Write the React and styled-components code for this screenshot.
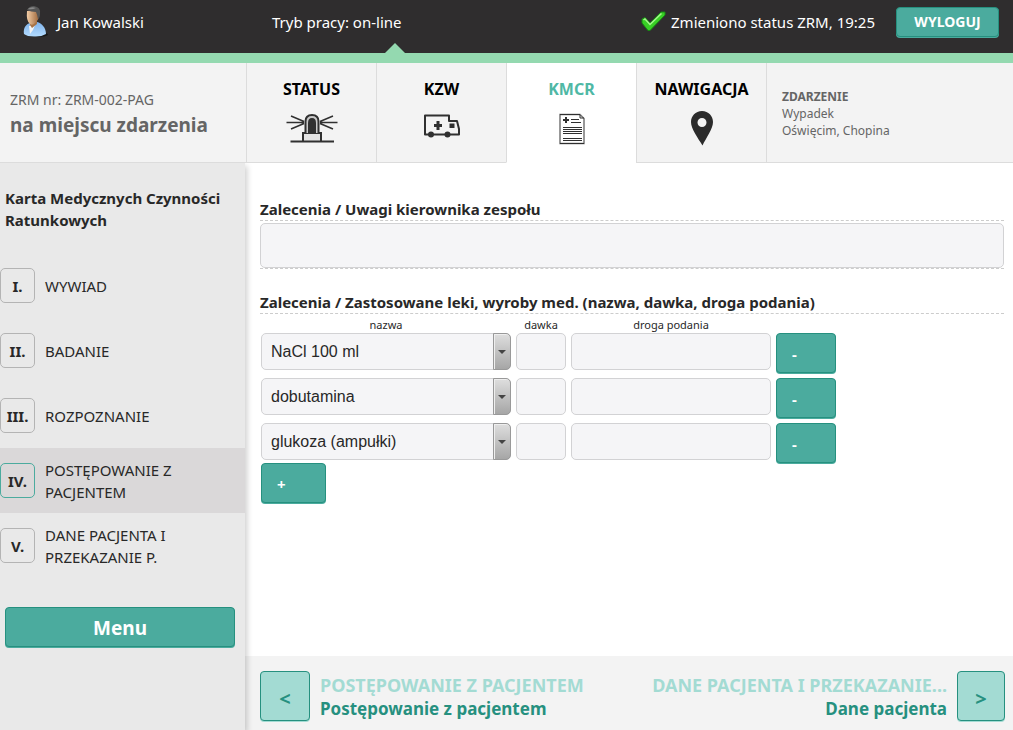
import React, { useState } from 'react';
import styled, { createGlobalStyle } from 'styled-components';

const GlobalStyle = createGlobalStyle`
  * {
    box-sizing: border-box;
  }

  body {
    margin: 0;
    color: #282828;
    background: #fff;
    font-family: 'Noto Sans', 'Open Sans', sans-serif;
    font-size: 15px;
    line-height: 22px;
  }

  button,
  input,
  textarea,
  select {
    font-family: inherit;
  }
`;

const Page = styled.div`
  display: flex;
  flex-direction: column;
  min-height: 100vh;
`;

const TopBar = styled.header`
  position: relative;
  display: flex;
  align-items: center;
  height: 63px;
  padding: 6px 14px 16px 22px;
  color: #fff;
  background: #2f2d2e;
  border-bottom: 10px solid #94d9b0;

  &::after {
    content: '';
    position: absolute;
    left: 385px;
    bottom: 0;
    border: 10px solid transparent;
    border-top: 0;
    border-bottom-color: #94d9b0;
  }
`;

const User = styled.div`
  display: flex;
  align-items: center;
  gap: 9px;
  width: 250px;
`;

const Status = styled.div`
  display: flex;
  align-items: center;
  gap: 5px;
  margin-left: auto;
  margin-right: 21px;
`;

const Button = styled.button`
  padding: 0;
  color: #fff;
  font-weight: bold;
  background: #4bab9e;
  border: 1px solid #26907f;
  border-radius: 4px;
  box-shadow: 0 1px 0 #4bab9e;
  cursor: pointer;
`;

const LogoutButton = styled(Button)`
  width: 103px;
  height: 30px;
  font-size: 14px;
`;

const TabBar = styled.div`
  position: relative;
  z-index: 2;
  display: flex;
  height: 100px;
  background: #f3f3f3;
`;

const Team = styled.div`
  display: flex;
  flex-direction: column;
  justify-content: center;
  width: 246px;
  padding: 2px 0 0 10px;
  color: #656565;
  font-size: 14px;
  border-bottom: 1px solid #dcdcdc;
`;

const TeamState = styled.strong`
  font-size: 19px;
  line-height: 28px;
`;

const Tabs = styled.nav`
  display: flex;
`;

const Tab = styled.a`
  display: flex;
  flex-direction: column;
  align-items: center;
  gap: 11px;
  width: 130px;
  padding-top: 15px;
  color: ${(props) => (props.$active ? '#4fb8a5' : '#000')};
  font-size: 16px;
  font-weight: bold;
  text-decoration: none;
  background: ${(props) => (props.$active ? '#fff' : '#f3f3f3')};
  border-left: 1px solid #dcdcdc;
  border-bottom: 1px solid ${(props) => (props.$active ? '#fff' : '#dcdcdc')};
`;

const Incident = styled.div`
  display: flex;
  flex: 1;
  flex-direction: column;
  justify-content: center;
  padding: 2px 0 0 15px;
  color: #656565;
  font-size: 12px;
  line-height: 17px;
  border-left: 1px solid #dcdcdc;
  border-bottom: 1px solid #dcdcdc;
`;

const Body = styled.div`
  display: flex;
  flex: 1;
`;

const Sidebar = styled.aside`
  position: relative;
  z-index: 1;
  flex: none;
  width: 245px;
  background: #e9e9e9;
  box-shadow: 2px 3px 6px rgba(0, 0, 0, 0.2);
`;

const SidebarTitle = styled.h2`
  margin: 0;
  padding: 24px 5px 22px;
  font-size: 15px;
  line-height: 22px;
`;

const Step = styled.a`
  display: flex;
  align-items: center;
  gap: 10px;
  height: 65px;
  padding-right: 30px;
  color: #282828;
  text-decoration: none;
  background: ${(props) => (props.$active ? '#dad8d9' : 'transparent')};
`;

const StepNumber = styled.span`
  display: flex;
  flex: none;
  align-items: center;
  justify-content: center;
  width: 35px;
  height: 35px;
  font-size: 15px;
  font-weight: bold;
  border: 1px solid ${(props) => (props.$active ? '#4bab9e' : '#b4b4b4')};
  border-radius: 5px;
`;

const MenuButton = styled(Button)`
  display: block;
  width: 230px;
  height: 40px;
  margin: 29px 5px;
  padding-top: 2px;
  font-size: 19px;
`;

const Main = styled.main`
  display: flex;
  flex: 1;
  flex-direction: column;
  min-width: 0;
`;

const Form = styled.form`
  flex: 1;
  padding: 35px 9px 20px 15px;
`;

const Section = styled.section`
  margin-bottom: 22px;
`;

const SectionTitle = styled.h3`
  margin: 0 0 2px;
  font-size: 15px;
  line-height: 22px;
  border-bottom: 1px dashed #ccc;
`;

const NotesWrap = styled.div`
  display: flex;
  border-bottom: 1px dashed #ccc;
`;

const Notes = styled.textarea`
  width: 100%;
  height: 45px;
  padding: 8px;
  font-size: 16px;
  background: #f5f5f7;
  border: 1px solid #d2d2d4;
  border-radius: 5px;
  resize: none;
`;

const DrugList = styled.div`
  display: grid;
  gap: 5px;
`;

const DrugRow = styled.div`
  display: grid;
  grid-template-columns: 250px 50px 200px 60px;
  gap: 5px;
  margin-left: 1px;
`;

const DrugHeader = styled(DrugRow)`
  font-size: 11px;
  line-height: 17px;
  text-align: center;
`;

const Field = styled.input`
  width: 100%;
  height: 37px;
  padding: 0 9px;
  font-size: 16px;
  background: #f5f5f7;
  border: 1px solid #d2d2d4;
  border-radius: 5px;
`;

const SelectWrap = styled.div`
  position: relative;
  height: 37px;
`;

const Select = styled.select`
  width: 100%;
  height: 37px;
  padding: 0 28px 0 9px;
  color: #282828;
  font-family: 'Liberation Sans', Arial, sans-serif;
  font-size: 16px;
  background: #f5f5f7;
  border: 1px solid #d2d2d4;
  border-radius: 5px;
  appearance: none;
`;

const SelectArrow = styled.span`
  position: absolute;
  top: 0;
  right: 0;
  display: flex;
  align-items: center;
  justify-content: center;
  width: 18px;
  height: 37px;
  background: linear-gradient(#dedede, #a6a6a6);
  border: 1px solid #999;
  border-radius: 0 5px 5px 0;
  box-shadow: inset 1px 1px 0 #eee;
  pointer-events: none;

  &::after {
    content: '';
    border: 4px solid transparent;
    border-top-color: #444;
    border-bottom: 0;
  }
`;

const RowButton = styled(Button)`
  width: ${(props) => props.$width};
  height: 40px;
  padding: 2px 0 0 15px;
  font-size: 15px;
  text-align: left;
`;

const AddButton = styled(RowButton)`
  display: block;
  margin-left: 1px;
`;

const Pager = styled.footer`
  display: flex;
  justify-content: space-between;
  height: 74px;
  padding: 15px 8px 0 15px;
  background: #f3f3f3;
`;

const PagerLink = styled.div`
  display: flex;
  gap: 10px;
  text-align: ${(props) => props.$align};
`;

const PagerButton = styled(Button)`
  width: ${(props) => props.$width};
  height: 50px;
  padding-top: 4px;
  color: #26907f;
  font-size: 20px;
  background: #a3dbd3;
  box-shadow: 0 1px 0 #a3dbd3;
`;

const PagerText = styled.div`
  display: flex;
  flex-direction: column;
  padding-top: 2px;
  color: #26907f;
  font-size: 17px;
  font-weight: bold;
  line-height: 24px;
`;

const PagerSection = styled.span`
  color: #a3dbd3;
  font-size: 18px;
`;

function UserIcon() {
  return (
    <svg width="26" height="32" viewBox="0 0 26 32" aria-hidden="true">
      <defs>
        <linearGradient id="skin" x1="0" x2="1">
          <stop offset="0" stopColor="#f3cda6" />
          <stop offset="1" stopColor="#9a6337" />
        </linearGradient>
        <linearGradient id="shirt" x1="0" y1="0" x2="0" y2="1">
          <stop offset="0" stopColor="#7fb2ea" />
          <stop offset="1" stopColor="#b4dcff" />
        </linearGradient>
      </defs>
      <ellipse cx="15" cy="28.5" rx="11" ry="2.5" fill="#171717" />
      <path d="M2 28C1 22 4 18 9 16.5L15 16C20 17 24 22 24 28Q19 31 12 30.5Q5 30.5 2 28Z" fill="url(#shirt)" />
      <path d="M7 20L8 28L11 24L13 19Z" fill="#f4f4f4" />
      <path d="M8 15H15V18L10 22L8 19Z" fill="#a87345" />
      <path d="M5 5Q4 15 8 18Q11 20 14 16Q18 13 17 4Z" fill="url(#skin)" />
      <path d="M5 4Q7 0 12 0Q19 1 18 8Q18 12 16 13Q15 8 14 6Q9 6 5 4Z" fill="#555" />
      <path d="M6 3Q9 0 14 2Q10 4 6 3Z" fill="#888" />
    </svg>
  );
}

function CheckIcon() {
  return (
    <svg width="25" height="21" viewBox="0 0 25 21" aria-hidden="true">
      <path d="M1 8L4 6.5L9 12L20 1H24V4L9 19.5H7L1 12Z" fill="#38cf25" stroke="#178b13" />
      <path d="M2.5 9L4 8L9 13.5L20.5 2.5" fill="none" stroke="#a5f58d" strokeWidth="1.5" />
    </svg>
  );
}

function SirenIcon() {
  return (
    <svg width="52" height="34" viewBox="0 0 52 34" fill="none" stroke="#303030" aria-hidden="true">
      <path d="M17 30V22H35V30" fill="#e4e4e4" strokeWidth="2" />
      <path d="M19.5 22V10.5Q19.5 4 26 4T32.500 10.500V22" fill="#c9c9c9" strokeWidth="2" />
      <path d="M22 23V12Q22 7 26 7T30 12V23Z" fill="#303030" stroke="none" />
      <path d="M4.5 30.5H48" strokeWidth="2" />
      <path d="M0.5 11.5H18M5 5L18 10.5M5 18L18 12.5M34 11.5H51.500M34 10.500L47 5M34 12.500L47 18" strokeWidth="1.5" />
    </svg>
  );
}

function AmbulanceIcon() {
  return (
    <svg width="38" height="34" viewBox="0 0 38 34" aria-hidden="true">
      <path d="M2 4.5H26V10H34L36 18V23.5H2Z" fill="none" stroke="#303030" strokeWidth="2" strokeLinejoin="round" />
      <path d="M13.5 10H16.5V13H19V16H16.5V19H13.5V16H11V13H13.5Z" fill="#303030" />
      <path d="M26.5 12.5H31.5V17H26.5Z" fill="#303030" />
      <circle cx="8" cy="23.5" r="3" fill="#303030" />
      <circle cx="24.5" cy="23.5" r="3" fill="#303030" />
    </svg>
  );
}

function CardIcon() {
  return (
    <svg width="26" height="34" viewBox="0 0 26 34" fill="none" stroke="#303030" aria-hidden="true">
      <path d="M1 3.5H21L25 7.5V32.5H1Z" fill="#fff" stroke="#777" strokeWidth="1.5" />
      <path d="M1 3.5H21M1 32.5H25M21 4V7H25" />
      <path d="M7 6V12M4 9H10" strokeWidth="2" />
      <path d="M12 8.5H20M12 11.5H22M4 16.5H23M4 18.5H23M4 20.5H23M4 22.5H23M4 27.5H23M4 29.5H23" />
    </svg>
  );
}

function PinIcon() {
  return (
    <svg width="24" height="35" viewBox="0 0 24 35" aria-hidden="true">
      <path
        fillRule="evenodd"
        d="M12 0C5.5 0 1 5 1 11C1 18 8 27 12.5 34.5C16 27 23 18 23 11C23 5 18.500 0 12 0ZM12 7A4.5 4.5 0 1 1 12 16A4.5 4.5 0 1 1 12 7Z"
        fill="#2b2b2b"
      />
    </svg>
  );
}

const tabs = [
  { name: 'STATUS', icon: SirenIcon },
  { name: 'KZW', icon: AmbulanceIcon },
  { name: 'KMCR', icon: CardIcon, active: true },
  { name: 'NAWIGACJA', icon: PinIcon },
];

const steps = [
  { number: 'I.', name: 'WYWIAD' },
  { number: 'II.', name: 'BADANIE' },
  { number: 'III.', name: 'ROZPOZNANIE' },
  { number: 'IV.', name: 'POSTĘPOWANIE Z PACJENTEM', active: true },
  { number: 'V.', name: 'DANE PACJENTA I PRZEKAZANIE P.' },
];

const drugNames = ['NaCl 100 ml', 'dobutamina', 'glukoza (ampułki)'];

function App() {
  const [drugs, setDrugs] = useState(drugNames.map((name, id) => ({ id, name })));
  const [nextId, setNextId] = useState(drugNames.length);

  const addDrug = () => {
    setDrugs([...drugs, { id: nextId, name: drugNames[0] }]);
    setNextId(nextId + 1);
  };

  const removeDrug = (id) => {
    setDrugs(drugs.filter((drug) => drug.id !== id));
  };

  return (
    <Page>
      <GlobalStyle />
      <TopBar>
        <User>
          <UserIcon />
          Jan Kowalski
        </User>
        <span>Tryb pracy: on-line</span>
        <Status>
          <CheckIcon />
          Zmieniono status ZRM, 19:25
        </Status>
        <LogoutButton type="button">WYLOGUJ</LogoutButton>
      </TopBar>

      <TabBar>
        <Team>
          ZRM nr: ZRM-002-PAG
          <TeamState>na miejscu zdarzenia</TeamState>
        </Team>
        <Tabs>
          {tabs.map(({ name, icon: Icon, active }) => (
            <Tab key={name} href="#" $active={active}>
              {name}
              <Icon />
            </Tab>
          ))}
        </Tabs>
        <Incident>
          <strong>ZDARZENIE</strong>
          <span>Wypadek</span>
          <span>Oświęcim, Chopina</span>
        </Incident>
      </TabBar>

      <Body>
        <Sidebar>
          <SidebarTitle>Karta Medycznych Czynności Ratunkowych</SidebarTitle>
          <nav>
            {steps.map((step) => (
              <Step key={step.number} href="#" $active={step.active}>
                <StepNumber $active={step.active}>{step.number}</StepNumber>
                {step.name}
              </Step>
            ))}
          </nav>
          <MenuButton type="button">Menu</MenuButton>
        </Sidebar>

        <Main>
          <Form>
            <Section>
              <SectionTitle>
                <label htmlFor="notes">Zalecenia / Uwagi kierownika zespołu</label>
              </SectionTitle>
              <NotesWrap>
                <Notes id="notes" />
              </NotesWrap>
            </Section>

            <Section>
              <SectionTitle>Zalecenia / Zastosowane leki, wyroby med. (nazwa, dawka, droga podania)</SectionTitle>
              <DrugHeader>
                <span id="drug-name">nazwa</span>
                <span id="drug-dose">dawka</span>
                <span id="drug-route">droga podania</span>
              </DrugHeader>
              <DrugList>
                {drugs.map((drug) => (
                  <DrugRow key={drug.id}>
                    <SelectWrap>
                      <Select aria-labelledby="drug-name" defaultValue={drug.name}>
                        {drugNames.map((name) => (
                          <option key={name}>{name}</option>
                        ))}
                      </Select>
                      <SelectArrow />
                    </SelectWrap>
                    <Field type="text" aria-labelledby="drug-dose" />
                    <Field type="text" aria-labelledby="drug-route" />
                    <RowButton type="button" $width="60px" onClick={() => removeDrug(drug.id)}>
                      -
                    </RowButton>
                  </DrugRow>
                ))}
              </DrugList>
              <AddButton type="button" $width="65px" onClick={addDrug}>
                +
              </AddButton>
            </Section>
          </Form>

          <Pager>
            <PagerLink $align="left">
              <PagerButton type="button" $width="50px">&lt;</PagerButton>
              <PagerText>
                <PagerSection>POSTĘPOWANIE Z PACJENTEM</PagerSection>
                <span>Postępowanie z pacjentem</span>
              </PagerText>
            </PagerLink>
            <PagerLink $align="right">
              <PagerText>
                <PagerSection>DANE PACJENTA I PRZEKAZANIE...</PagerSection>
                <span>Dane pacjenta</span>
              </PagerText>
              <PagerButton type="button" $width="48px">&gt;</PagerButton>
            </PagerLink>
          </Pager>
        </Main>
      </Body>
    </Page>
  );
}

export default App;
